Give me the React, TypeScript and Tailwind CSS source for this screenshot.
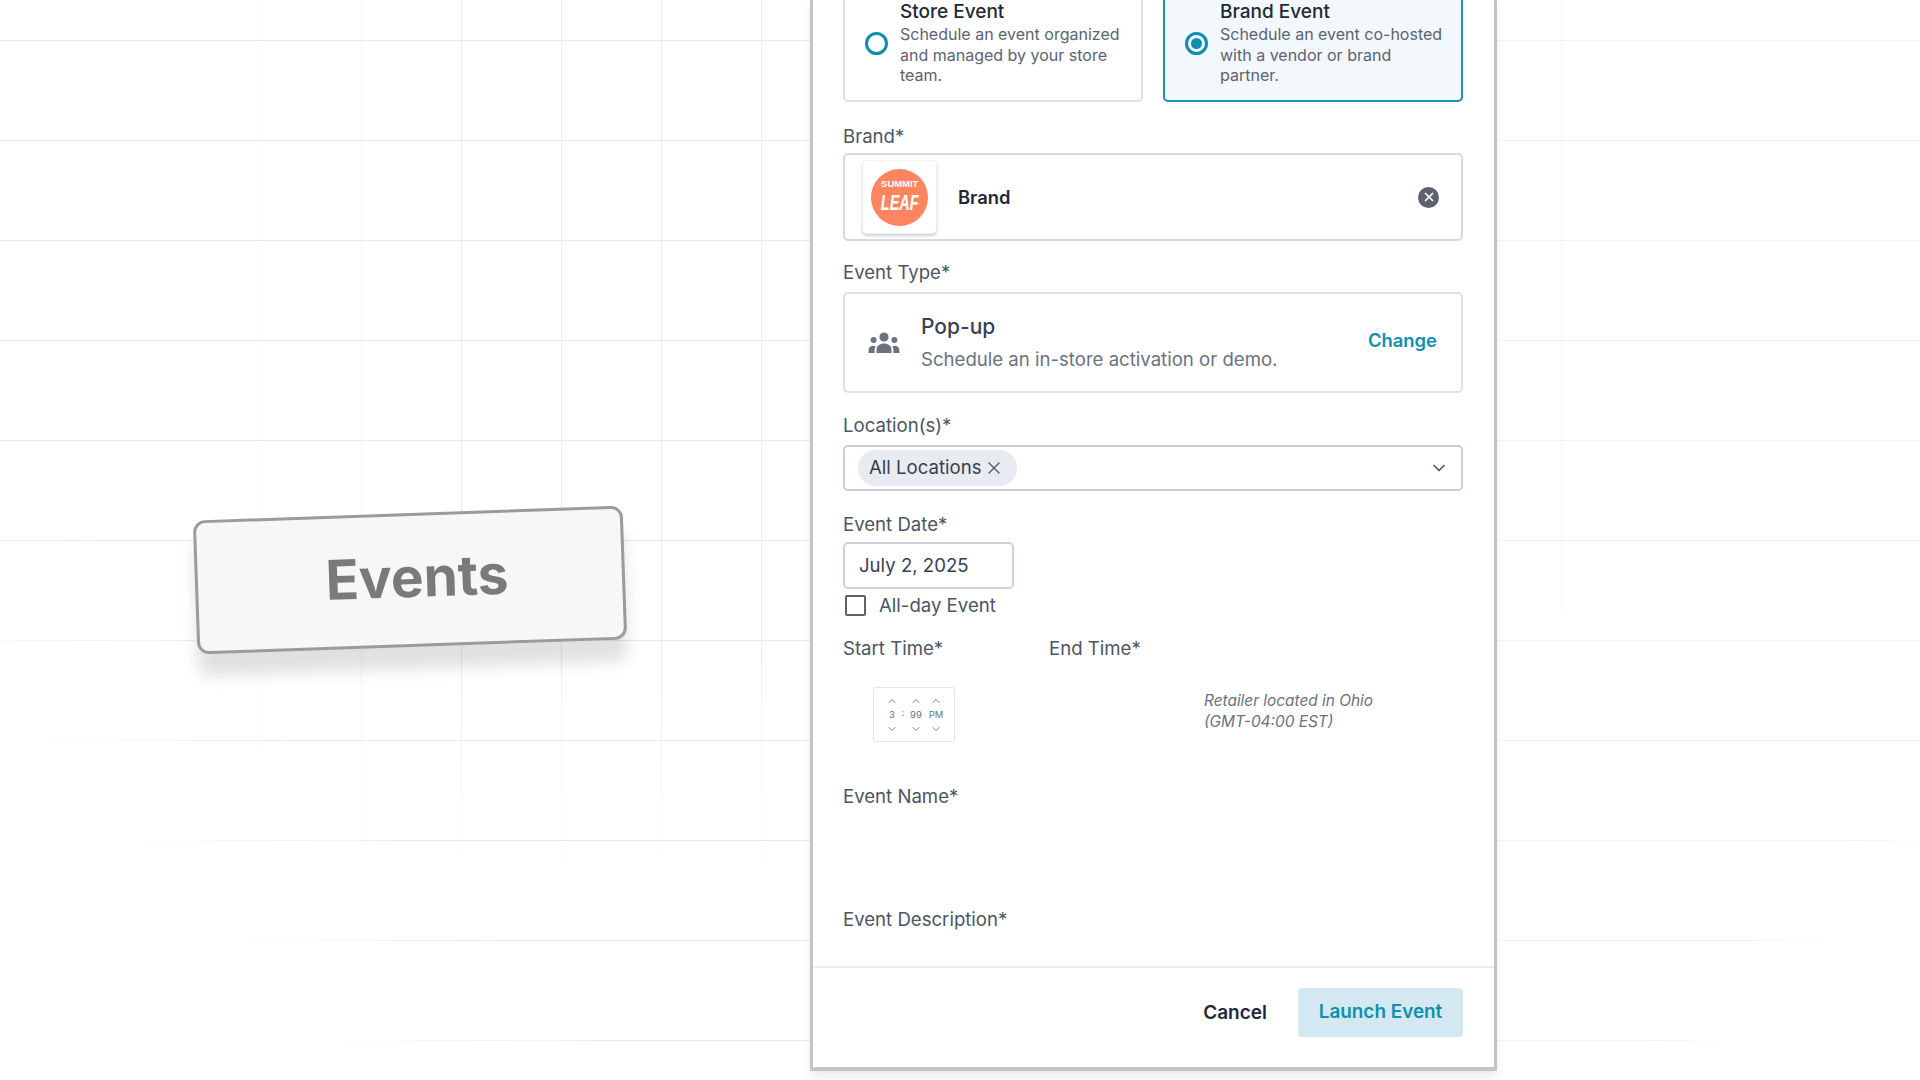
import { ChevronDown, ChevronUp, X } from "lucide-react";

const labelClass = "text-[18.6px] leading-6 text-[#4b5563]";

const Label = ({ children, className = "" }: { children: string; className?: string }) => (
  <div className={`${labelClass} ${className}`}>{children}</div>
);

const Radio = ({ checked }: { checked?: boolean }) => (
  <div className="w-[23px] h-[23px] shrink-0 rounded-full border-[3px] border-[#0e8fad] flex items-center justify-center">
    {checked && <div className="w-[11px] h-[11px] rounded-full bg-[#0e8fad]" />}
  </div>
);

const EventOption = ({
  title,
  lines,
  selected,
}: {
  title: string;
  lines: string[];
  selected?: boolean;
}) => (
  <div
    className={`flex-1 h-[120px] rounded-b-[5px] flex items-start gap-[12px] pl-[20px] border-2 ${
      selected ? "border-[#1a93b0] bg-[#f2f8fb]" : "border-[#dde0e7] bg-white"
    }`}
  >
    <div className="mt-[48px]">
      <Radio checked={selected} />
    </div>
    <div className="pt-[16px]">
      <div className="text-[19px] leading-[24px] font-medium text-[#1f2937]">{title}</div>
      <div className="text-[16px] leading-[20.7px] text-[#5b6470]">
        {lines.map((line) => (
          <div key={line}>{line}</div>
        ))}
      </div>
    </div>
  </div>
);

const LogoTile = () => (
  <div className="w-[75px] h-[74px] rounded-[5px] bg-white border border-[#eef0f3] shadow-[0_2px_3px_rgba(0,0,0,0.18)] flex items-center justify-center">
    <div className="w-[57px] h-[57px] rounded-full bg-[#ff8560] flex flex-col items-center justify-center text-white font-['Liberation_Sans',sans-serif] font-bold">
      <span className="text-[9px] leading-[11px] scale-x-[1.05]">SUMMIT</span>
      <span className="text-[22px] leading-[25px] italic scale-x-[0.66]">LEAF</span>
    </div>
  </div>
);

const PeopleIcon = () => (
  <svg width="32" height="24" viewBox="0 0 32 24" fill="#6b7280">
    <circle cx="16" cy="6" r="4.6" />
    <circle cx="5.6" cy="9" r="3" />
    <circle cx="26.4" cy="9" r="3" />
    <path d="M8.500 22v-3.500c0-3.600 3.400-6 7.500-6s7.500 2.400 7.500 6V22z" />
    <path d="M6.600 22H.6v-3c0-2.600 2-4.300 4.500-4.300 1 0 2 .2 2.800.7-1 1-1.300 2.100-1.300 3.600z" />
    <path d="M25.400 22h6v-3c0-2.600-2-4.300-4.500-4.300-1 0-2 .2-2.800.7 1 1 1.300 2.100 1.300 3.600z" />
  </svg>
);

const TimeColumn = ({ value, className = "" }: { value: string; className?: string }) => (
  <div className={`flex flex-col items-center text-[#6b7280] ${className}`}>
    <ChevronUp size={12} strokeWidth={1.8} />
    <span className="text-[9.5px] leading-[14px] my-[1px]">{value}</span>
    <ChevronDown size={12} strokeWidth={1.8} />
  </div>
);

export default function App() {
  return (
    <div className="h-screen w-full overflow-hidden flex bg-white font-['Inter',sans-serif]">
      {/* left side, grid fades out towards the corner */}
      <div className="w-[810px] shrink-0 h-full flex items-center justify-center bg-[linear-gradient(45deg,#fff_19%,transparent_34%),linear-gradient(#ecebf3_1px,transparent_1px),linear-gradient(90deg,#fff_200px,transparent_460px),linear-gradient(transparent_640px,#fff_880px),linear-gradient(90deg,#ebebf0_1px,transparent_1px)] bg-[size:100%_100%,100px_100px,100%_100%,100%_100%,100px_100px] bg-[position:0_0,0_40px,0_0,0_0,61px_0]">
        <div className="w-[430px] h-[134px] mt-[80px] ml-[10px] -rotate-2 rounded-[12px] border-[3px] border-[#9b9b9b] bg-[#f7f7f7] shadow-[0_22px_16px_rgba(0,0,0,0.12)] flex items-center justify-center">
          <span className="text-[55px] font-bold text-[#7a7a7a] font-['Inter',sans-serif] ml-[14px] mb-[5px]">Events</span>
        </div>
      </div>

      {/* modal */}
      <div className="w-[687px] h-[1071px] shrink-0 bg-white border-x-[3px] border-b-[4px] border-[#c4c4c4] shadow-[0_6px_8px_rgba(0,0,0,0.08)] flex flex-col">
        <div className="flex-1 pl-[30px] pr-[31px]">
          <div className="flex gap-[20px] h-[102px] items-end overflow-hidden">
            <EventOption
              title="Store Event"
              lines={["Schedule an event organized", "and managed by your store", "team."]}
            />
            <EventOption
              selected
              title="Brand Event"
              lines={["Schedule an event co-hosted", "with a vendor or brand", "partner."]}
            />
          </div>

          <Label className="mt-[22px]">Brand*</Label>
          <div className="mt-[5px] h-[88px] rounded-[5px] border-2 border-[#d5d9e2] flex items-center pl-[17px] pr-[22px]">
            <LogoTile />
            <span className="ml-[21px] mt-[2px] flex-1 text-[18.4px] font-semibold text-[#1f2937]">Brand</span>
            <div className="w-[21px] h-[21px] rounded-full bg-[#5b6270] flex items-center justify-center">
              <X size={14} strokeWidth={3} className="text-white" />
            </div>
          </div>

          <Label className="mt-[19px]">Event Type*</Label>
          <div className="mt-[8px] h-[101px] rounded-[5px] border-2 border-[#dde0e7] flex items-center pl-[23px] pr-[24px]">
            <PeopleIcon />
            <div className="ml-[21px] mb-[1px] flex-1">
              <div className="text-[21px] leading-[28px] font-medium text-[#374151]">Pop-up</div>
              <div className="mt-[6px] text-[18.6px] leading-[24px] text-[#6b7280]">
                Schedule an in-store activation or demo.
              </div>
            </div>
            <span className="text-[18.4px] font-semibold text-[#0e8fad] mb-[4px]">Change</span>
          </div>

          <Label className="mt-[20px]">Location(s)*</Label>
          <div className="mt-[8px] h-[46px] rounded-[5px] border-2 border-[#c9d0dc] flex items-center pl-[13px] pr-[12px]">
            <div className="h-[36px] w-[159px] rounded-full bg-[#e8ebf0] flex items-center pl-[11px] gap-[2px]">
              <span className="text-[18.6px] text-[#374151]">All Locations</span>
              <X size={20} strokeWidth={1.5} className="text-[#4b5563]" />
            </div>
            <div className="flex-1" />
            <ChevronDown size={20} strokeWidth={2} className="text-[#4b5563]" />
          </div>

          <Label className="mt-[21px]">Event Date*</Label>
          <div className="mt-[6px] w-[171px] h-[47px] rounded-[5px] border-2 border-[#ccd2dd] flex items-center pl-[14px] text-[18.6px] text-[#374151]">
            July 2, 2025
          </div>
          <div className="mt-[4px] flex items-center pl-[2px] gap-[13px]">
            <div className="w-[21px] h-[21px] rounded-[2px] border-[2.5px] border-[#5b6270]" />
            <span className="text-[18.6px] leading-[24px] text-[#4b5563]">All-day Event</span>
          </div>

          <div className="mt-[19px] flex">
            <Label className="w-[206px]">Start Time*</Label>
            <Label>End Time*</Label>
          </div>

          <div className="mt-[27px] h-[55px] flex items-center">
            <div className="ml-[30px] w-[82px] h-[55px] rounded-[2px] border border-[#e5e7ee] flex items-center justify-center">
              <TimeColumn value="3" className="w-[18px]" />
              <span className="text-[9px] text-[#6b7280] w-[4px] text-center mb-[3px]">:</span>
              <TimeColumn value="99" className="w-[22px]" />
              <TimeColumn value="PM" className="w-[18px]" />
            </div>
            <div className="ml-[249px] mb-[8px] text-[15.4px] leading-[21px] italic text-[#6b7280]">
              Retailer located in Ohio
              <br />
              (GMT-04:00 EST)
            </div>
          </div>

          <Label className="mt-[42px]">Event Name*</Label>
          <Label className="mt-[99px]">Event Description*</Label>
        </div>

        <div className="h-[101px] shrink-0 border-t-2 border-[#eceef2] flex items-center justify-end gap-[31px] pr-[31px] pb-[10px]">
          <span className="mt-[2px] text-[19px] font-semibold text-[#1f2937]">Cancel</span>
          <div className="w-[165px] h-[49px] rounded-[4px] bg-[#d3e8f0] flex items-center justify-center text-[18.9px] font-semibold text-[#0e8fad]">
            Launch Event
          </div>
        </div>
      </div>

      {/* right side */}
      <div className="flex-1 h-full bg-[linear-gradient(315deg,#fff_15%,transparent_22%),linear-gradient(#f0f0f4_1px,transparent_1px),linear-gradient(#f1f1f4,#f1f1f4)] bg-[size:100%_100%,100px_100px,1px_610px] bg-[position:0_0,0_40px,64px_0] [background-repeat:no-repeat,repeat,no-repeat]" />
    </div>
  );
}
